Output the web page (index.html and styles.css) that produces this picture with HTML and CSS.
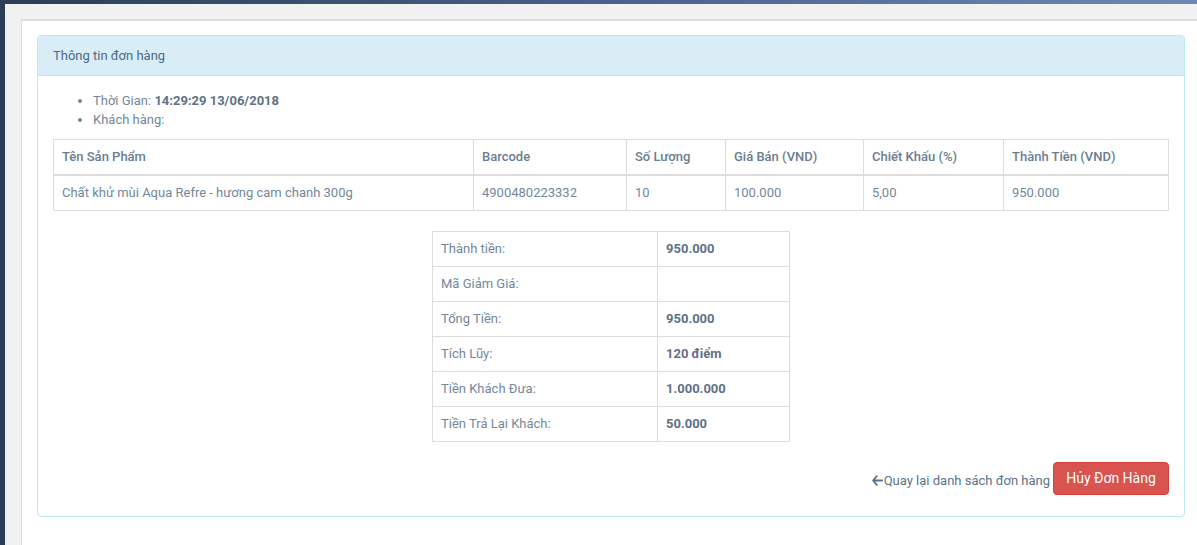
FILE: index.html
```html
<!DOCTYPE html>
<html lang="vi">
<head>
<meta charset="utf-8">
<title>Thông tin đơn hàng</title>
<link rel="stylesheet" href="styles.css">
</head>
<body>
<div class="app">
  <div class="sidebar"></div>
  <div class="main">
    <div class="topbar"></div>
    <div class="page">
      <div class="content">
        <div class="panel">
          <div class="panel-heading">Thông tin đơn hàng</div>
          <div class="panel-body">
            <ul class="info">
              <li>Thời Gian: <b>14:29:29 13/06/2018</b></li>
              <li>Khách hàng:</li>
            </ul>
            <table class="items">
              <colgroup>
                <col class="c1"><col class="c2"><col class="c3"><col class="c4"><col class="c5"><col class="c6">
              </colgroup>
              <thead>
                <tr>
                  <th>Tên Sản Phẩm</th>
                  <th>Barcode</th>
                  <th>Số Lượng</th>
                  <th>Giá Bán (VND)</th>
                  <th>Chiết Khấu (%)</th>
                  <th>Thành Tiền (VND)</th>
                </tr>
              </thead>
              <tbody>
                <tr>
                  <td>Chất khử mùi Aqua Refre - hương cam chanh 300g</td>
                  <td>4900480223332</td>
                  <td>10</td>
                  <td>100.000</td>
                  <td>5,00</td>
                  <td>950.000</td>
                </tr>
              </tbody>
            </table>
            <table class="summary">
              <tr><td class="k">Thành tiền:</td><td class="v">950.000</td></tr>
              <tr><td class="k">Mã Giảm Giá:</td><td class="v"></td></tr>
              <tr><td class="k">Tổng Tiền:</td><td class="v">950.000</td></tr>
              <tr><td class="k">Tích Lũy:</td><td class="v">120 điểm</td></tr>
              <tr><td class="k">Tiền Khách Đưa:</td><td class="v">1.000.000</td></tr>
              <tr><td class="k">Tiền Trả Lại Khách:</td><td class="v">50.000</td></tr>
            </table>
            <div class="actions">
              <a class="back" href="#"><svg class="arrow" viewBox="0 0 12 12" width="11" height="11"><path d="M5.2 1.2 L1.2 6 L5.2 10.8 M1.4 6 H11" fill="none" stroke="currentColor" stroke-width="2" stroke-linecap="round" stroke-linejoin="round"/></svg>Quay lại danh sách đơn hàng</a>
              <button class="btn-danger" type="button">Hủy Đơn Hàng</button>
            </div>
          </div>
        </div>
      </div>
    </div>
  </div>
</div>
</body>
</html>
```
FILE: styles.css
```css
* { box-sizing: border-box; }
html, body { margin: 0; padding: 0; }
body {
  font-family: Roboto, "Liberation Sans", Arial, sans-serif;
  font-size: 13px;
  line-height: 1.471;
  color: #73879c;
  background: #fff;
}
.app { display: flex; min-height: 545px; }
.sidebar { width: 5px; background: #2a3f54; flex: none; }
.main { flex: 1; display: flex; flex-direction: column; }
.topbar {
  height: 4px;
  background: linear-gradient(to right, #2a3f54 0%, #4a6088 50%, #6f87b4 100%);
}
.page {
  flex: 1;
  background: #f1f1f1;
  padding: 15px 0 0 16px;
  display: flex;
}
.content {
  flex: 1;
  background: #fff;
  border-left: 1px solid #dcdcdc;
  border-top: 2px solid #dedede;
  padding: 14px 12px 15px 15px;
}
.panel {
  border: 1px solid #bce8f1;
  border-radius: 4px;
  background: #fff;
}
.panel-heading {
  background: #d9edf7;
  border-bottom: 1px solid #bce8f1;
  border-radius: 3px 3px 0 0;
  padding: 10px 15px 9px;
  height: 40px;
  color: #4a6a86;
}
.panel-body { padding: 15px; }
.info { margin: 0 0 10px; padding-left: 40px; }
.info b { color: #5f7186; }
table { border-collapse: collapse; border-spacing: 0; }
.items { width: 100%; margin-bottom: 20px; }
.items th, .items td, .summary td {
  border: 1px solid #dddddd;
  padding: 8px;
  text-align: left;
  vertical-align: top;
  line-height: 18px;
}
.items th { font-weight: 500; color: #6a7d92; border-bottom-width: 2px; }
.c1 { width: 420px; }
.c2 { width: 153px; }
.c3 { width: 99px; }
.c4 { width: 138px; }
.c5 { width: 140px; }
.c6 { width: 165px; }
.summary { margin: 0 auto; width: 358px; }
.summary .k { width: 225px; }
.summary .v { font-weight: 700; color: #5f7186; }
.actions {
  display: flex;
  justify-content: flex-end;
  align-items: center;
  margin-top: 20px;
  padding-bottom: 6px;
}
.back {
  color: #5a738e;
  text-decoration: none;
  display: flex;
  align-items: center;
  margin-right: 3px;
  margin-top: 3px;
}
.arrow { margin-right: 1px; }
.btn-danger {
  font-family: Roboto, "Liberation Sans", Arial, sans-serif;
  font-size: 14px;
  line-height: 20px;
  color: #fff;
  background: #d9534f;
  border: 1px solid #d43f3a;
  border-radius: 4px;
  padding: 5px 12px 6px;
  height: 33px;
  width: 116px;
}
```
